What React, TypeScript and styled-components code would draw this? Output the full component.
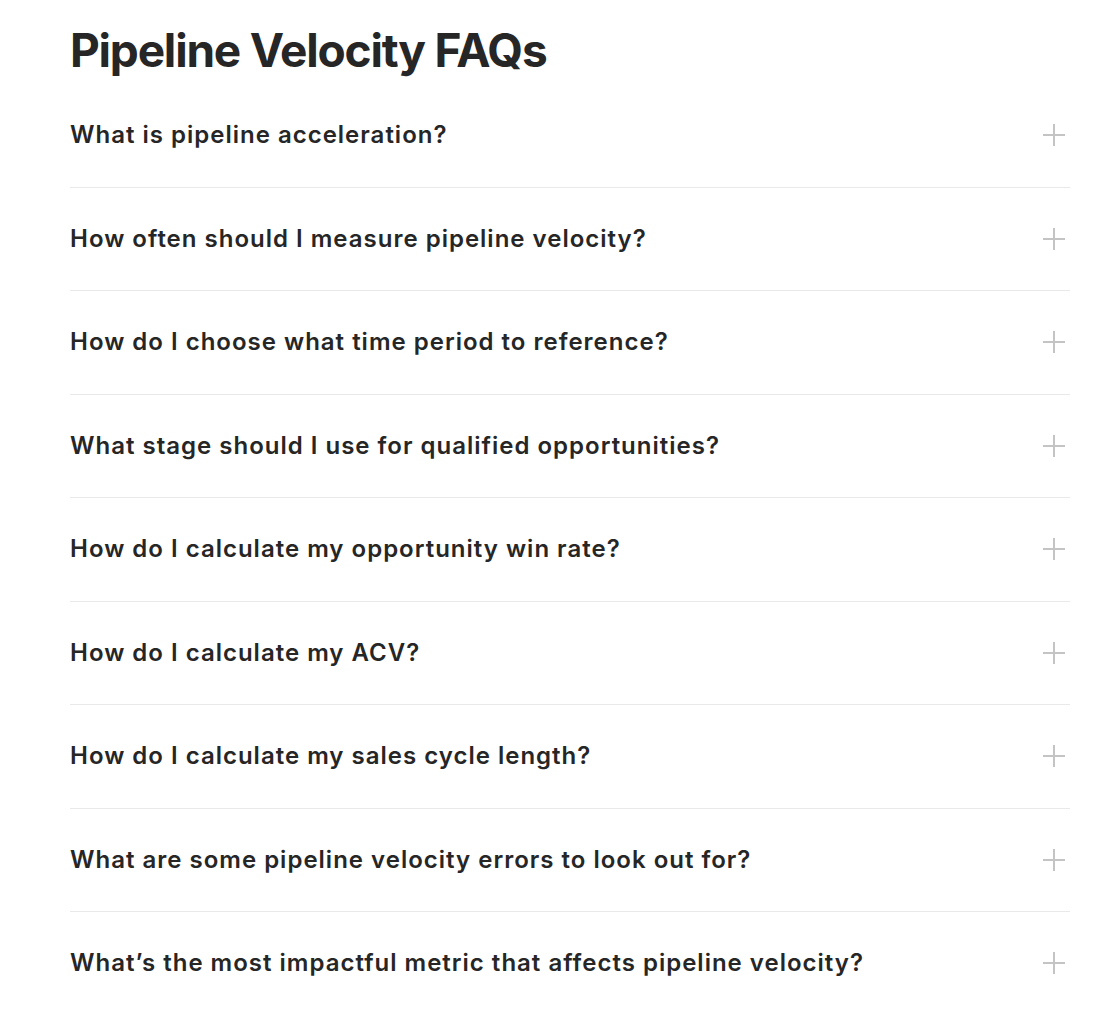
import styled, { createGlobalStyle } from "styled-components";

const textColor = "#262626";
const lineColor = "#e9e9e9";
const iconColor = "#c4c4c4";

const GlobalStyle = createGlobalStyle`
  html, body {
    margin: 0;
    padding: 0;
    background: #ffffff;
  }
  body {
    font-family: Inter, "Noto Sans", "Liberation Sans", sans-serif;
    color: ${textColor};
  }
`;

const Section = styled.section`
  width: 1000px;
  padding: 22px 0 0 70px;
`;

const Title = styled.h2`
  margin: 0;
  font-size: 46px;
  line-height: 56px;
  font-weight: 700;
  letter-spacing: -1.2px;
  color: ${textColor};
`;

const List = styled.div`
  display: flex;
  flex-direction: column;
  margin-top: 6px;
`;

const Row = styled.div<{ $last?: boolean }>`
  display: flex;
  align-items: center;
  justify-content: space-between;
  padding: 37px 0;
  border-bottom: ${({ $last }) => ($last ? "none" : `1px solid ${lineColor}`)};
  cursor: pointer;
`;

const Question = styled.h3`
  margin: 0;
  font-size: 24px;
  line-height: 28.5px;
  font-weight: 600;
  letter-spacing: 1px;
  color: ${textColor};
`;

const PlusIcon = styled.svg`
  width: 24px;
  height: 24px;
  margin-right: 4px;
  flex-shrink: 0;
`;

const questions = [
  "What is pipeline acceleration?",
  "How often should I measure pipeline velocity?",
  "How do I choose what time period to reference?",
  "What stage should I use for qualified opportunities?",
  "How do I calculate my opportunity win rate?",
  "How do I calculate my ACV?",
  "How do I calculate my sales cycle length?",
  "What are some pipeline velocity errors to look out for?",
  "What’s the most impactful metric that affects pipeline velocity?",
];

function Plus() {
  return (
    <PlusIcon viewBox="0 0 24 24" fill="none" stroke={iconColor} strokeWidth="2">
      <line x1="12" y1="1" x2="12" y2="23" />
      <line x1="1" y1="12" x2="23" y2="12" />
    </PlusIcon>
  );
}

export default function App() {
  return (
    <>
      <GlobalStyle />
      <Section>
        <Title>Pipeline Velocity FAQs</Title>
        <List>
          {questions.map((q, i) => (
            <Row key={q} $last={i === questions.length - 1}>
              <Question>{q}</Question>
              <Plus />
            </Row>
          ))}
        </List>
      </Section>
    </>
  );
}
